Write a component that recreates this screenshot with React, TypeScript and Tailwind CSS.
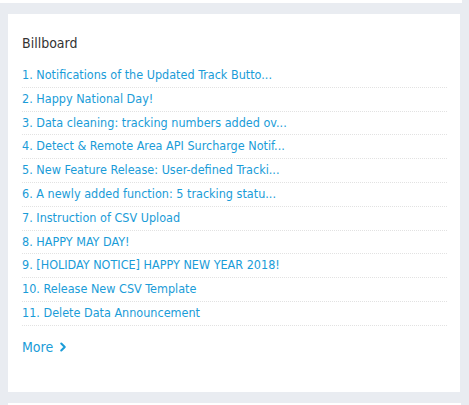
import { ChevronRight } from 'lucide-react';

const notices = [
  'Notifications of the Updated Track Butto...',
  'Happy National Day!',
  'Data cleaning: tracking numbers added ov...',
  'Detect & Remote Area API Surcharge Notif...',
  'New Feature Release: User-defined Tracki...',
  'A newly added function: 5 tracking statu...',
  'Instruction of CSV Upload',
  'HAPPY MAY DAY!',
  '[HOLIDAY NOTICE] HAPPY NEW YEAR 2018!',
  'Release New CSV Template',
  'Delete Data Announcement',
];

export default function App() {
  return (
    <div
      className="h-[405px] w-[469px] overflow-hidden bg-[#e9ecf1]"
      style={{ fontFamily: '"DejaVu Sans Condensed", "DejaVu Sans", sans-serif' }}
    >
      <div className="h-[3px] w-[462px] bg-white" />
      <div className="ml-2 mt-[11px] h-[378px] w-[452px] bg-white px-[14px] pt-[19px]">
        {/* Billboard */}
        <h2 className="text-[14px] leading-[20px] text-[#333]">Billboard</h2>
        <ul className="mt-[11px] w-[425px]">
          {notices.map((n, i) => (
            <li
              key={i}
              className="h-[23.8px] border-b border-dotted border-[#e2e2e2] text-[12.5px] leading-[22px] text-[#1a9cd8] whitespace-nowrap"
            >
              {i + 1}. {n}
            </li>
          ))}
        </ul>
        <a className="mt-[11px] flex items-center gap-[3px] text-[14px] leading-[20px] text-[#1a9cd8]">
          More
          <ChevronRight className="h-[14px] w-[14px]" strokeWidth={3.5} />
        </a>
      </div>
      <div className="ml-2 mt-[11px] h-[10px] w-[453px] bg-white" />
    </div>
  );
}
